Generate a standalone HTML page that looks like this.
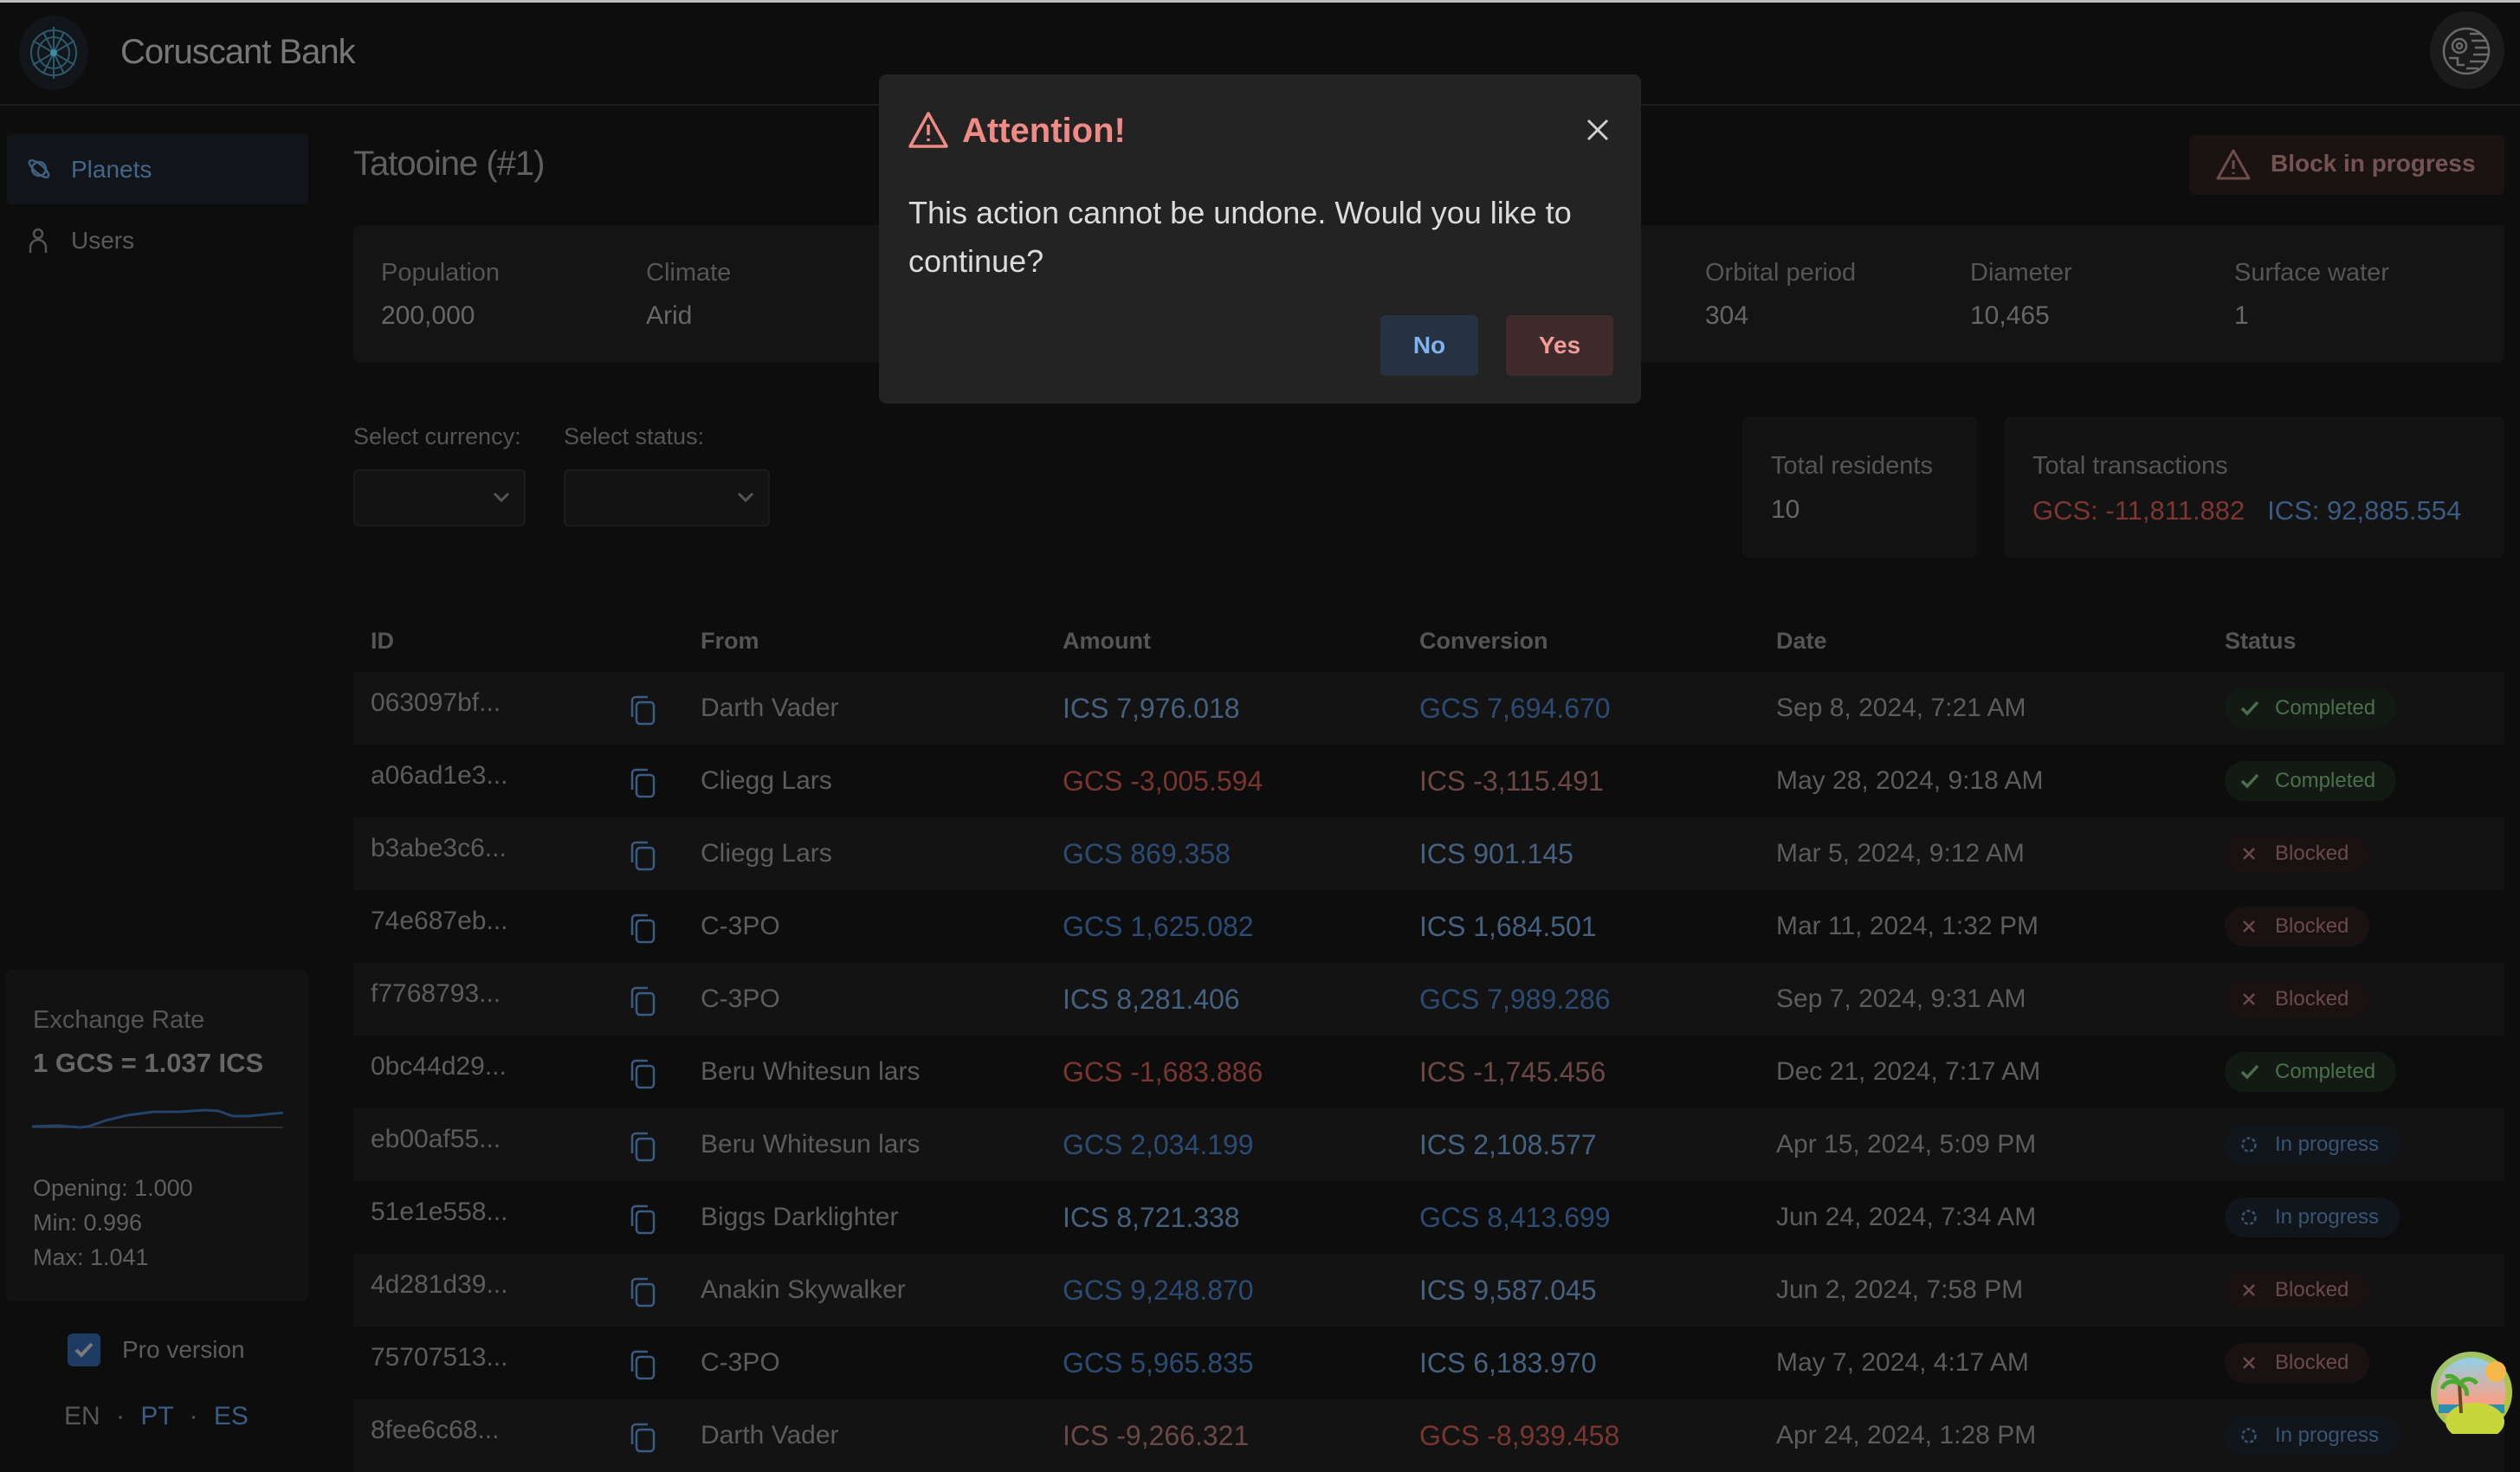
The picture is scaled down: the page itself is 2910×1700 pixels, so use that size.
<!DOCTYPE html>
<html><head><meta charset="utf-8"><style>
*{margin:0;padding:0;box-sizing:border-box}
body{width:2910px;height:1668px;background:#0d0d0d;font-family:"Liberation Sans",sans-serif;position:relative;overflow:hidden;color:#5a5a5a}
.a{position:absolute;white-space:nowrap}
.lbl{font-size:29px;color:#555}
.val{font-size:30px;color:#666}
.row{position:absolute;left:408px;width:2484px;height:84px}
.row .c{position:absolute;top:0;line-height:84px;font-size:30px;color:#5c5c5c;white-space:nowrap}
.b{color:#3b5b82}.r{color:#7d3632}
.row .c.gb{color:#2c4b74}.row .c.ib{color:#45617f}.row .c.gr{color:#7a3530}.row .c.ir{color:#6b4745}
.pill{position:absolute;left:2161px;top:19px;height:46px;border-radius:23px;font-size:24px;line-height:46px;padding:0 24px 0 58px}
.pill svg{position:absolute;left:18px;top:13px}
.pc{background:#121a13;color:#4b6f4b}
.pb{background:#1a1212;color:#6b4a4a}
.pp{background:#11161d;color:#3a5473}
</style></head><body>
<div class="a" style="left:0;top:0;width:2910px;height:3px;background:#bdbdbd"></div>
<div class="a" style="left:0;top:120px;width:2910px;height:2px;background:#1e1e1e"></div>
<svg class="a" style="left:20px;top:17px" width="84" height="88" viewBox="0 0 84 88"><ellipse cx="42" cy="44" rx="40" ry="43" fill="#12151a"/><g stroke="#2c5a6c" stroke-width="2" fill="none"><circle cx="42" cy="44" r="26"/><circle cx="42" cy="44" r="18"/><path d="M42 14V74M18 30L66 58M18 58L66 30M30 20L54 68M54 20L30 68"/></g><circle cx="42" cy="44" r="4" fill="#3f8ca0"/></svg>
<div class="a" style="left:139px;top:38px;font-size:40px;color:#777;letter-spacing:-1px">Coruscant Bank</div>
<div class="a" style="left:2806px;top:13px;width:86px;height:90px;border-radius:50%;background:#1b1b1b"></div>
<svg class="a" style="left:2818px;top:27px" width="64" height="64" viewBox="0 0 64 64" fill="none" stroke="#6a6a6a" stroke-width="2.5"><circle cx="30" cy="32" r="26"/><circle cx="22" cy="26" r="8"/><circle cx="22" cy="26" r="3"/><path d="M34 12h14M36 20h18M40 28h16M38 36h18M34 44h18M30 52h14M10 40h10v8h8"/></svg>
<div class="a" style="left:8px;top:155px;width:348px;height:81px;background:#111419;border-radius:4px"></div>
<svg class="a" style="left:30px;top:180px" width="30" height="30" viewBox="0 0 30 30" fill="none" stroke="#3e5f80" stroke-width="2.5"><circle cx="15" cy="15" r="8"/><ellipse cx="15" cy="15" rx="14" ry="5" transform="rotate(40 15 15)"/></svg>
<div class="a" style="left:82px;top:180px;font-size:28px;color:#44658a">Planets</div>
<svg class="a" style="left:32px;top:262px" width="24" height="32" viewBox="0 0 24 32" fill="none" stroke="#555" stroke-width="2.5"><circle cx="12" cy="8" r="5"/><path d="M3 30v-6a9 9 0 0 1 18 0v6"/></svg>
<div class="a" style="left:82px;top:262px;font-size:28px;color:#5a5a5a">Users</div>
<div class="a" style="left:6px;top:1120px;width:350px;height:383px;background:#121212;border-radius:8px"></div>
<div class="a" style="left:38px;top:1162px;font-size:29px;color:#555">Exchange Rate</div>
<div class="a" style="left:38px;top:1210px;font-size:31px;font-weight:bold;color:#666">1 GCS = 1.037 ICS</div>
<svg class="a" style="left:37px;top:1270px" width="290" height="40" viewBox="0 0 290 40"><line x1="0" y1="32" x2="290" y2="32" stroke="#3a3a3a" stroke-width="1.5"/><path d="M0 31 L30 30 L55 32 L65 31 L85 24 L110 18 L140 14 L170 14 L200 12 L215 13 L232 19 L250 19 L290 15" fill="none" stroke="#23436a" stroke-width="3"/></svg>
<div class="a" style="left:38px;top:1357px;font-size:27px;color:#5f5f5f">Opening: 1.000</div>
<div class="a" style="left:38px;top:1397px;font-size:27px;color:#5f5f5f">Min: 0.996</div>
<div class="a" style="left:38px;top:1437px;font-size:27px;color:#5f5f5f">Max: 1.041</div>
<div class="a" style="left:78px;top:1540px;width:38px;height:38px;background:#1d3b63;border-radius:6px"></div>
<svg class="a" style="left:85px;top:1549px" width="24" height="20" viewBox="0 0 24 20"><path d="M3 10l6 6 12-13" fill="none" stroke="#7a7a7a" stroke-width="4"/></svg>
<div class="a" style="left:141px;top:1543px;font-size:28px;color:#5c5c5c">Pro version</div>
<div class="a" style="left:74px;top:1619px;font-size:30px;color:#555">EN <span style="margin:0 10px">·</span> <span style="color:#3b5b82">PT</span> <span style="margin:0 10px">·</span> <span style="color:#3b5b82">ES</span></div>
<div class="a" style="left:408px;top:167px;font-size:40px;color:#606060;letter-spacing:-1px">Tatooine (#1)</div>
<div class="a" style="left:2528px;top:156px;width:364px;height:69px;background:#1b1312;border-radius:6px"></div>
<svg class="a" style="left:2558px;top:171px" width="42" height="38" viewBox="0 0 42 38" fill="none" stroke="#6e4d4b" stroke-width="3"><path d="M21 3L39 35H3Z" stroke-linejoin="round"/><path d="M21 14v10M21 28v2"/></svg>
<div class="a" style="left:2622px;top:173px;font-size:28px;font-weight:bold;color:#745452">Block in progress</div>
<div class="a" style="left:408px;top:260px;width:2484px;height:159px;background:#141414;border-radius:8px"></div>
<div class="a lbl" style="left:440px;top:299px">Population</div><div class="a val" style="left:440px;top:348px">200,000</div>
<div class="a lbl" style="left:746px;top:299px">Climate</div><div class="a val" style="left:746px;top:348px">Arid</div>
<div class="a lbl" style="left:1969px;top:299px">Orbital period</div><div class="a val" style="left:1969px;top:348px">304</div>
<div class="a lbl" style="left:2275px;top:299px">Diameter</div><div class="a val" style="left:2275px;top:348px">10,465</div>
<div class="a lbl" style="left:2580px;top:299px">Surface water</div><div class="a val" style="left:2580px;top:348px">1</div>
<div class="a" style="left:408px;top:489px;font-size:27px;color:#555">Select currency:</div>
<div class="a" style="left:651px;top:489px;font-size:27px;color:#555">Select status:</div>
<div class="a" style="left:408px;top:542px;width:199px;height:66px;background:#131313;border:2px solid #1c1c1c;border-radius:6px"></div>
<div class="a" style="left:651px;top:542px;width:238px;height:66px;background:#131313;border:2px solid #1c1c1c;border-radius:6px"></div>
<svg class="a" style="left:568px;top:567px" width="22" height="14" viewBox="0 0 22 14"><path d="M3 3l8 8 8-8" fill="none" stroke="#555" stroke-width="3"/></svg>
<svg class="a" style="left:850px;top:567px" width="22" height="14" viewBox="0 0 22 14"><path d="M3 3l8 8 8-8" fill="none" stroke="#555" stroke-width="3"/></svg>
<div class="a" style="left:2012px;top:481px;width:271px;height:163px;background:#131313;border-radius:8px"></div>
<div class="a" style="left:2314px;top:481px;width:578px;height:163px;background:#131313;border-radius:8px"></div>
<div class="a lbl" style="left:2045px;top:522px">Total residents</div><div class="a val" style="left:2045px;top:572px">10</div>
<div class="a lbl" style="left:2347px;top:522px">Total transactions</div>
<div class="a val" style="left:2347px;top:572px;font-size:31px"><span class="r">GCS: -11,811.882</span>&nbsp;&nbsp;&nbsp;<span class="b">ICS: 92,885.554</span></div>
<div class="a" style="left:428px;top:725px;font-size:27px;font-weight:bold;color:#555">ID</div>
<div class="a" style="left:809px;top:725px;font-size:27px;font-weight:bold;color:#555">From</div>
<div class="a" style="left:1227px;top:725px;font-size:27px;font-weight:bold;color:#555">Amount</div>
<div class="a" style="left:1639px;top:725px;font-size:27px;font-weight:bold;color:#555">Conversion</div>
<div class="a" style="left:2051px;top:725px;font-size:27px;font-weight:bold;color:#555">Date</div>
<div class="a" style="left:2569px;top:725px;font-size:27px;font-weight:bold;color:#555">Status</div>
<div id="rows"></div>
<script>
var d=[["063097bf...","Darth Vader","b","ICS 7,976.018","b","GCS 7,694.670","Sep 8, 2024, 7:21 AM","c"],
["a06ad1e3...","Cliegg Lars","r","GCS -3,005.594","r","ICS -3,115.491","May 28, 2024, 9:18 AM","c"],
["b3abe3c6...","Cliegg Lars","b","GCS 869.358","b","ICS 901.145","Mar 5, 2024, 9:12 AM","b"],
["74e687eb...","C-3PO","b","GCS 1,625.082","b","ICS 1,684.501","Mar 11, 2024, 1:32 PM","b"],
["f7768793...","C-3PO","b","ICS 8,281.406","b","GCS 7,989.286","Sep 7, 2024, 9:31 AM","b"],
["0bc44d29...","Beru Whitesun lars","r","GCS -1,683.886","r","ICS -1,745.456","Dec 21, 2024, 7:17 AM","c"],
["eb00af55...","Beru Whitesun lars","b","GCS 2,034.199","b","ICS 2,108.577","Apr 15, 2024, 5:09 PM","p"],
["51e1e558...","Biggs Darklighter","b","ICS 8,721.338","b","GCS 8,413.699","Jun 24, 2024, 7:34 AM","p"],
["4d281d39...","Anakin Skywalker","b","GCS 9,248.870","b","ICS 9,587.045","Jun 2, 2024, 7:58 PM","b"],
["75707513...","C-3PO","b","GCS 5,965.835","b","ICS 6,183.970","May 7, 2024, 4:17 AM","b"],
["8fee6c68...","Darth Vader","r","ICS -9,266.321","r","GCS -8,939.458","Apr 24, 2024, 1:28 PM","p"]];
var ic={c:'<svg width="22" height="20" viewBox="0 0 22 20"><path d="M2 10l6 6 12-13" fill="none" stroke="#4b6f4b" stroke-width="3.5"/></svg>',
b:'<svg width="20" height="20" viewBox="0 0 20 20"><path d="M4 4l12 12M16 4L4 16" stroke="#6b4a4a" stroke-width="2.5"/></svg>',
p:'<svg width="20" height="20" viewBox="0 0 20 20"><circle cx="10" cy="10" r="7.5" fill="none" stroke="#3a5473" stroke-width="2.5" stroke-dasharray="4 2.5"/></svg>'};
var tx={c:"Completed",b:"Blocked",p:"In progress"};
function cl(c,t){return (t.charAt(0)=="G"?"g":"i")+c;}
var h="";
for(var i=0;i<d.length;i++){var r=d[i],y=776+i*84;
h+='<div class="row" style="top:'+y+'px;background:'+(i%2==0?'#131313':'#0d0d0d')+'">'+
'<div class="c" style="left:20px;top:-6px">'+r[0]+'</div>'+
'<svg style="position:absolute;left:318px;top:26px" width="34" height="36" viewBox="0 0 34 36" fill="none" stroke="#3b5b82" stroke-width="2.5"><rect x="9" y="9" width="20" height="25" rx="4"/><path d="M4 26V7a4 4 0 0 1 4-4h14"/></svg>'+
'<div class="c" style="left:401px">'+r[1]+'</div>'+
'<div class="c '+cl(r[2],r[3])+'" style="left:819px;font-size:32px">'+r[3]+'</div>'+
'<div class="c '+cl(r[4],r[5])+'" style="left:1231px;font-size:32px">'+r[5]+'</div>'+
'<div class="c" style="left:1643px">'+r[6]+'</div>'+
'<div class="pill p'+r[7]+'">'+ic[r[7]]+tx[r[7]]+'</div></div>';}
document.getElementById("rows").innerHTML=h;
</script>
<svg class="a" style="left:2806px;top:1560px" width="96" height="96" viewBox="0 0 96 96"><defs><linearGradient id="g" x1="0" y1="0" x2="0" y2="1"><stop offset="0" stop-color="#8fd0e8"/><stop offset="0.6" stop-color="#f4a38a"/></linearGradient><linearGradient id="rg" x1="0" y1="0" x2="1" y2="1"><stop offset="0" stop-color="#9bc27a"/><stop offset="1" stop-color="#b6c52a"/></linearGradient></defs><circle cx="48" cy="48" r="47" fill="url(#rg)"/><circle cx="48" cy="48" r="40" fill="url(#g)"/><circle cx="76" cy="24" r="12" fill="#f5b74a"/><path d="M10 62h76v10H10z" fill="#2f8fb0"/><ellipse cx="52" cy="82" rx="34" ry="22" fill="#c7d63a"/><path d="M36 72L34 38" stroke="#6b4a20" stroke-width="4"/><path d="M34 38c-10-6-18 0-20 6M34 38c8-8 16-6 20 0M34 38c-4-8-10-10-16-8M34 38c6 2 10 8 8 14" stroke="#4caa30" stroke-width="5" fill="none"/></svg>
<div class="a" style="left:1015px;top:86px;width:880px;height:380px;background:#232323;border-radius:8px"></div>
<svg class="a" style="left:1048px;top:128px" width="48" height="44" viewBox="0 0 48 44" fill="none" stroke="#f08a85" stroke-width="3.5"><path d="M24 3L45 41H3Z" stroke-linejoin="round"/><path d="M24 16v12M24 32v3"/></svg>
<div class="a" style="left:1111px;top:129px;font-size:40px;font-weight:bold;color:#f08a85">Attention!</div>
<svg class="a" style="left:1832px;top:137px" width="26" height="26" viewBox="0 0 26 26"><path d="M2 2l22 22M24 2L2 24" stroke="#cfcfcf" stroke-width="3"/></svg>
<div class="a" style="left:1049px;top:218px;font-size:36px;line-height:56px;color:#dcdcdc;white-space:normal;width:830px">This action cannot be undone. Would you like to continue?</div>
<div class="a" style="left:1594px;top:364px;width:113px;height:70px;background:#263242;border-radius:6px;color:#7fb3ef;font-size:28px;font-weight:bold;text-align:center;line-height:70px">No</div>
<div class="a" style="left:1739px;top:364px;width:124px;height:70px;background:#3f2b2b;border-radius:6px;color:#f29b97;font-size:28px;font-weight:bold;text-align:center;line-height:70px">Yes</div>
</body></html>
